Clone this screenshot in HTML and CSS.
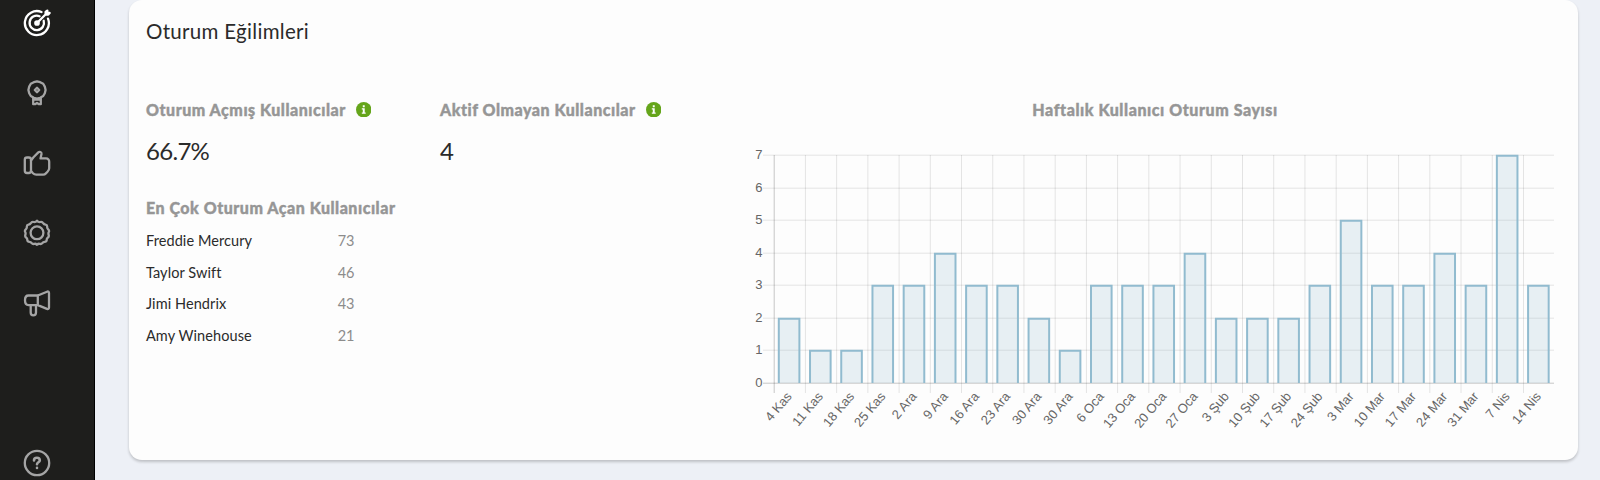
FILE: index.html
```html
<!DOCTYPE html>
<html lang="tr">
<head>
  <meta charset="UTF-8">
  <meta name="viewport" content="width=device-width, initial-scale=1.0">
  <title>Oturum Eğilimleri</title>
  <link rel="stylesheet" href="styles.css">
</head>
<body>
  <nav class="sidebar">
    <a class="nav-item active">
      <svg viewBox="0 0 28 28" class="icon">
        <path d="M18.5 3A12 12 0 1 0 25 9.6"/>
        <path d="M16.5 7.2A7.2 7.2 0 1 0 20.7 11.8"/>
        <circle class="dot" cx="14" cy="14" r="1.7"/>
        <path d="M14.5 13.5 23.5 4.5M22.6 5.3V3L24.3 1.6V3.9H26.6L25.2 5.6Z"/>
      </svg>
    </a>
    <a class="nav-item">
      <svg viewBox="0 0 28 28" class="icon">
        <path d="M14 2.3 17.2 3.2 20.2 4.8 21.8 7.6 22.6 11 21.8 14.2 20.2 17 17.2 18.8 14 19.6 10.8 18.8 7.8 17 6.2 14.2 5.4 11 6.2 7.6 7.8 4.8 10.8 3.2Z"/>
        <path d="M14 8.8 16.2 11 14 13.2 11.8 11ZM10.2 19V25.2H12L14 24 16 25.2H17.8V19M10.2 20.6H17.8"/>
      </svg>
    </a>
    <a class="nav-item">
      <svg viewBox="0 0 28 28" class="icon">
        <rect x="1.8" y="8.5" width="6.2" height="15.5" rx="2.2"/>
        <path d="M8 11.5 10.5 8.3 15.3 3.4C16.6 2.2 18.7 3 18.5 4.9L17.5 9.4H23C25.2 9.4 26.3 10.9 26.2 12.8V19.3C26.2 20.7 25.5 21.8 24.5 22.8L22.9 24.4C22.2 25.1 21.3 25.6 20.2 25.6H13.2C11.8 25.6 10.9 25.1 10 24.2L8 22"/>
      </svg>
    </a>
    <a class="nav-item">
      <svg viewBox="0 0 28 28" class="icon">
        <path d="M14 1.6Q15.4 3.4 17.2 3 Q19.2 2.4 20.2 4.2 Q21 5.5 22.5 5.6 Q24.3 6 24.2 8 Q24.1 9.3 25.2 10.3 Q26.7 11.8 25.6 13.5 Q25.2 14.6 25.7 16 Q26.2 17.8 24.7 18.7 Q23.6 19.4 23.7 21 Q23.4 22.8 21.6 22.8 Q20.2 22.9 19.4 24 Q18.2 25.5 16.5 24.8 Q15.2 24.5 14 25.8 Q12.8 24.5 11.5 24.8 Q9.8 25.5 8.6 24 Q7.8 22.9 6.4 22.8 Q4.6 22.8 4.3 21 Q4.4 19.4 3.3 18.7 Q1.8 17.8 2.3 16 Q2.8 14.6 2.4 13.5 Q1.3 11.8 2.8 10.3 Q3.9 9.3 3.8 8 Q3.7 6 5.5 5.6 Q7 5.5 7.8 4.2 Q8.8 2.4 10.8 3 Q12.6 3.4 14 1.6Z"/>
        <circle cx="14" cy="13.8" r="6.4"/>
      </svg>
    </a>
    <a class="nav-item">
      <svg viewBox="0 0 28 28" class="icon">
        <path d="M14.8 6.5 24 2.7C25.2 2.2 26 2.9 26 4V18.5C26 19.8 25.2 20.3 24 19.9L14.8 16.1ZM14.8 6.5H5.5C3.3 6.5 2 8.4 2 11.3S3.3 16.1 5.5 16.1H14.8"/>
        <path d="M7.7 16.1V23.5C7.7 25.2 8.8 26.3 10.3 26.3S13 25.2 13 23.5V16.1"/>
      </svg>
    </a>
    <a class="nav-item help">
      <svg viewBox="0 0 28 28" class="icon">
        <circle cx="14" cy="14" r="12.2"/>
        <path class="thick" d="M11 11.5C11 9.7 12.2 8.8 13.9 8.8S16.8 9.8 16.8 11.4C16.8 13.3 14 13.3 14 15.3M14 18.9V19"/>
      </svg>
    </a>
  </nav>

  <main class="content">
    <section class="card">
      <h1 class="card-title">Oturum Eğilimleri</h1>
      <div class="card-body">
        <div class="stats">
          <div class="stat-row">
            <div class="stat">
              <h2 class="label label-logged">Oturum Açmış Kullanıcılar
                <svg viewBox="0 0 16 16" class="info"><circle cx="8" cy="8" r="8"/><path d="M7 3.4H9V5.3H7ZM6 6.5H9V10.8H10V12.2H6V10.8H7V7.8H6Z"/></svg>
              </h2>
              <div class="value">66.7%</div>
            </div>
            <div class="stat">
              <h2 class="label label-inactive">Aktif Olmayan Kullancılar
                <svg viewBox="0 0 16 16" class="info"><circle cx="8" cy="8" r="8"/><path d="M7 3.4H9V5.3H7ZM6 6.5H9V10.8H10V12.2H6V10.8H7V7.8H6Z"/></svg>
              </h2>
              <div class="value">4</div>
            </div>
          </div>
          <h2 class="label label-top">En Çok Oturum Açan Kullanıcılar</h2>
          <ul class="users">
            <li><span>Freddie Mercury</span><span class="count">73</span></li>
            <li><span>Taylor Swift</span><span class="count">46</span></li>
            <li><span>Jimi Hendrix</span><span class="count">43</span></li>
            <li><span>Amy Winehouse</span><span class="count">21</span></li>
          </ul>
        </div>
        <div class="chart-panel">
          <h2 class="label label-chart">Haftalık Kullanıcı Oturum Sayısı</h2>
          <svg id="chart" class="chart" width="814" height="300" viewBox="746 140 814 300"></svg>
        </div>
      </div>
    </section>
  </main>
  <script src="chart.js"></script>
</body>
</html>
```
FILE: styles.css
```css
* {
  box-sizing: border-box;
}
body {
  margin: 0;
  display: flex;
  height: 480px;
  overflow: hidden;
  background: #edf0f6;
  font-family: Lato, "Open Sans", sans-serif;
  color: #2b2b2b;
}
.sidebar {
  width: 95px;
  height: 480px;
  padding: 9px 0 3px 23px;
  display: flex;
  flex-direction: column;
  gap: 42px;
  background: #1e1e1c;
  border-right: 1px solid #000;
}
.nav-item {
  height: 28px;
  color: #a5a5a5;
}
.nav-item.active {
  color: #fff;
}
.nav-item.help {
  margin-top: auto;
}
.icon {
  display: block;
  width: 28px;
  height: 28px;
  fill: none;
  stroke: currentColor;
  stroke-width: 2.3;
  stroke-linecap: round;
  stroke-linejoin: round;
}
.dot {
  fill: currentColor;
}
.thick {
  stroke-width: 2.6;
}
.content {
  flex: 1;
  padding: 0 22px 20px 34px;
}
.card {
  height: 460px;
  padding: 17px 17px 0;
  background: #fdfdfd;
  border-radius: 13px;
  box-shadow: 0 2px 3px rgba(0, 0, 0, 0.2);
}
.card-title {
  margin: 0;
  font-size: 20.5px;
  font-weight: 400;
  line-height: 28px;
  letter-spacing: 0.3px;
}
.card-body {
  display: flex;
  margin-top: 52px;
}
.stats {
  width: 600px;
}
.stat-row {
  display: flex;
}
.stat {
  width: 294px;
}
.label {
  display: flex;
  align-items: center;
  gap: 10px;
  margin: 0;
  height: 25px;
  color: #969696;
  font-size: 16px;
  font-weight: 900;
  letter-spacing: 0.52px;
  white-space: nowrap;
  -webkit-text-stroke: 0.4px #969696;
}
.info {
  width: 15.5px;
  height: 15.5px;
  fill: #65a51b;
}
.info path {
  fill: #fff;
}
.value {
  margin-top: 13px;
  font-size: 24px;
  line-height: 32px;
  letter-spacing: -0.7px;
}
.label-top {
  margin-top: 28px;
}
.users {
  width: 208px;
  margin: 5px 0 0;
  padding: 0;
  list-style: none;
  font-size: 14.5px;
  letter-spacing: 0.08px;
}
.users li {
  display: flex;
  justify-content: space-between;
  height: 31.6px;
  line-height: 31.6px;
}
.count {
  color: #8c8c8c;
  letter-spacing: -0.3px;
}
.chart-panel {
  width: 814px;
}
.label-chart {
  justify-content: center;
  padding-left: 4px;
  letter-spacing: 0.57px;
}
.chart {
  display: block;
  margin-top: 18px;
  font-family: "Liberation Sans", Arial, sans-serif;
  font-size: 13px;
}
.chart text {
  fill: #666;
  text-anchor: end;
}
.grid {
  stroke: rgba(0, 0, 0, 0.1);
}
.axis {
  stroke: rgba(0, 0, 0, 0.22);
}
.bar {
  fill: rgba(145, 187, 207, 0.2);
}
.bar-line {
  fill: none;
  stroke: #91bbcf;
  stroke-width: 2;
}
```
FILE: chart.js
```js
const weeks = [
  ["4 Kas", 2], ["11 Kas", 1], ["18 Kas", 1], ["25 Kas", 3], ["2 Ara", 3],
  ["9 Ara", 4], ["16 Ara", 3], ["23 Ara", 3], ["30 Ara", 2], ["30 Ara", 1],
  ["6 Oca", 3], ["13 Oca", 3], ["20 Oca", 3], ["27 Oca", 4], ["3 Şub", 2],
  ["10 Şub", 2], ["17 Şub", 2], ["24 Şub", 3], ["3 Mar", 5], ["10 Mar", 3],
  ["17 Mar", 3], ["24 Mar", 4], ["31 Mar", 3], ["7 Nis", 7], ["14 Nis", 3]
];

const left = 774.2;
const right = 1554;
const bottom = 383;
const step = 31.22;
const yPos = value => bottom - value * 32.5;

let out = "";

// horizontal grid and values
for (let v = 0; v <= 7; v++) {
  const y = Math.floor(yPos(v)) + 0.2;
  out += `<line class="${v ? "grid" : "axis"}" x1="763" x2="${right}" y1="${y}" y2="${y}" />`;
  out += `<text x="762.5" y="${y + 3.3}">${v}</text>`;
}

// vertical grid, bars and week names
weeks.forEach(([name, count], i) => {
  const x = left + i * step;
  out += `<line class="${i ? "grid" : "axis"}" x1="${x}" x2="${x}" y1="155" y2="393" />`;

  const a = x + 4.6;
  const b = a + 20.6;
  const top = Math.floor(yPos(count)) + 0.8;
  out += `<rect class="bar" x="${a}" y="${top}" width="${b - a}" height="${bottom - top}" />`;
  out += `<path class="bar-line" d="M${a} ${bottom}V${top}H${b}V${bottom}" />`;
  out += `<text transform="translate(${x + 17.5} 396) rotate(-50)" y="1">${name}</text>`;
});

document.getElementById("chart").innerHTML = out;
```
